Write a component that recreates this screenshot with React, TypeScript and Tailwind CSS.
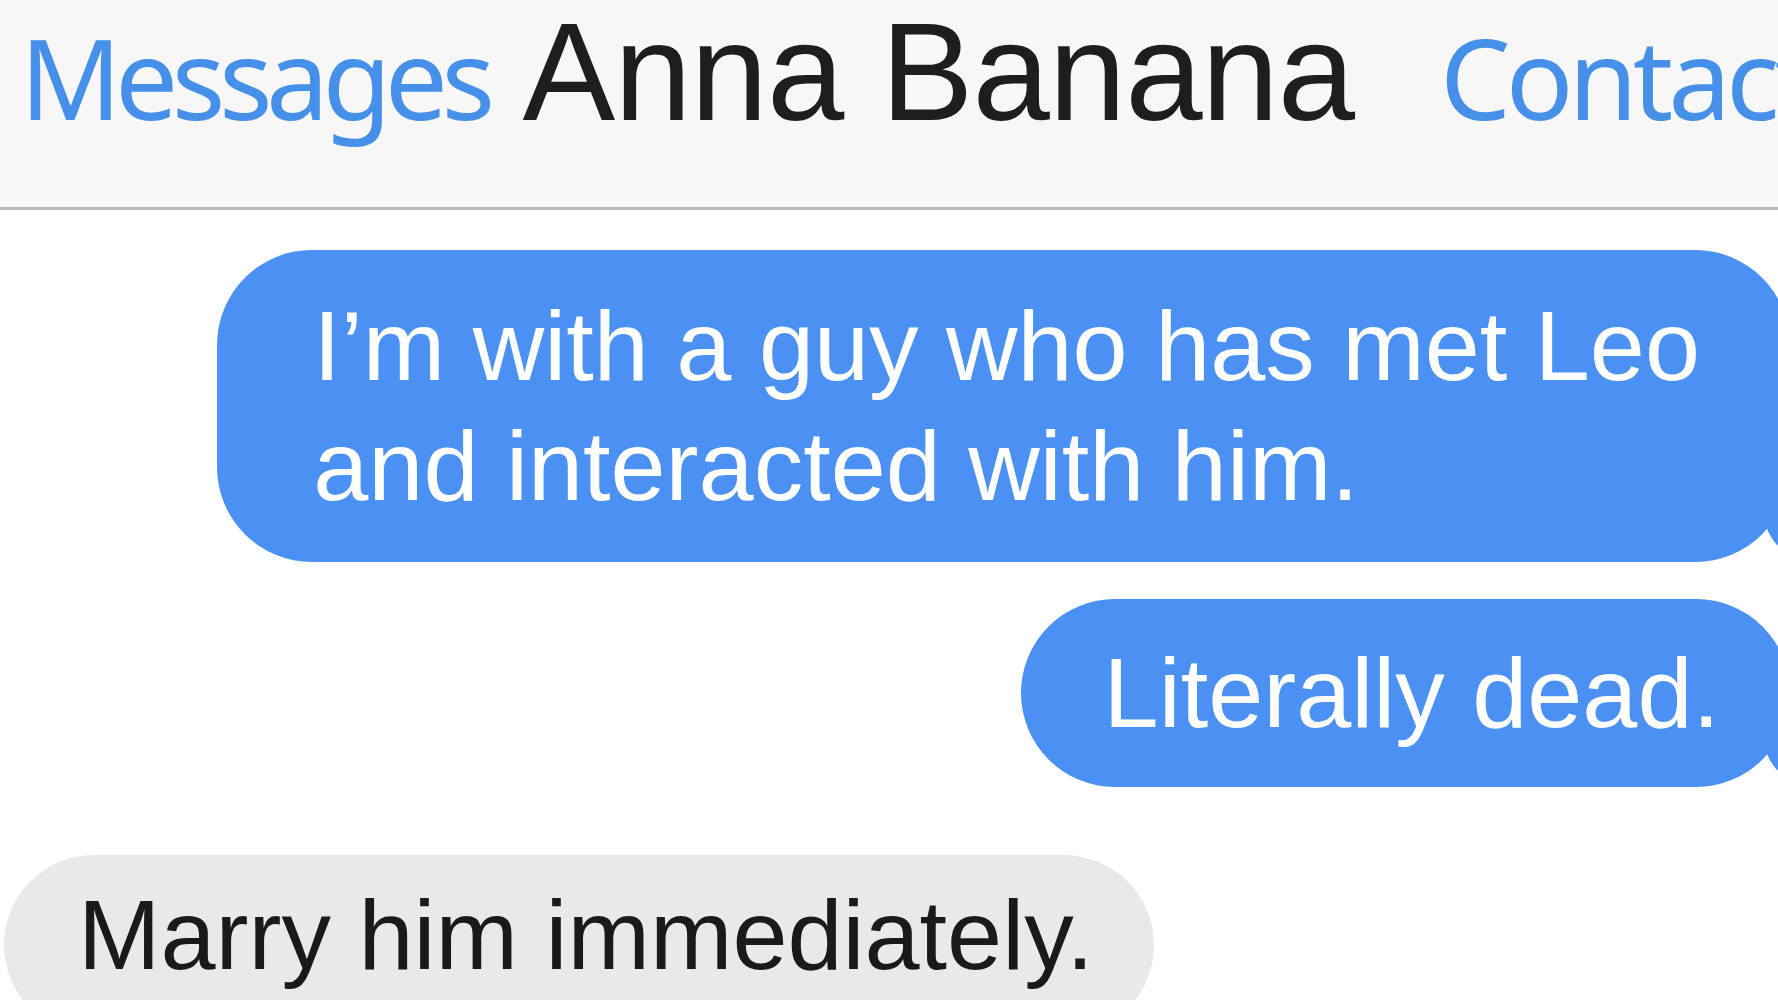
import React from 'react';

const sans = { fontFamily: '"Liberation Sans", Arial, sans-serif' };

const Tail: React.FC = () => (
  <svg
    className="absolute bottom-0 right-[-30px] w-[60px] h-[52px]"
    viewBox="0 0 60 52"
    aria-hidden
  >
    <path d="M6 16 L6 0 L60 0 L60 52 L44 52 C26 46 12 34 6 16 Z" fill="#4a91f3" />
  </svg>
);

const Outgoing: React.FC<{ lines: string[]; className: string }> = ({ lines, className }) => (
  <div className={`relative self-end bg-[#4a91f3] text-white text-[99px] leading-[120px] whitespace-nowrap ${className}`}>
    {lines.map((l, i) => (
      <div key={i}>{l}</div>
    ))}
    <Tail />
  </div>
);

export default function App() {
  return (
    <div className="w-[1778px] h-[1000px] overflow-hidden bg-white" style={sans}>
      <header className="h-[210px] bg-[#f7f7f7] border-b-[3px] border-[#b9b9b9] flex items-baseline pt-[2px] pl-[20px] whitespace-nowrap">
        <span className="font-['Noto_Sans',sans-serif] text-[112px] leading-none text-[#4690ea] tracking-[-6.5px]">
          Messages
        </span>
        <span className="ml-[34px] text-[139px] leading-none text-[#1e1e1e] tracking-[-1px]">Anna Banana</span>
        <span className="ml-[86px] font-['Noto_Sans',sans-serif] text-[112px] leading-none text-[#4690ea] tracking-[-5px]">
          Contact
        </span>
      </header>

      <main className="flex flex-col pt-[40px]">
        <Outgoing
          lines={['I’m with a guy who has met Leo', 'and interacted with him.']}
          className="mr-[-12px] rounded-[95px] pl-[96px] pr-[90px] py-[36px]"
        />
        <Outgoing
          lines={['Literally dead.']}
          className="mt-[37px] mr-[-12px] rounded-full pl-[83px] pr-[70px] py-[34px]"
        />
        <div className="mt-[68px] ml-[4px] self-start bg-[#e9e9eb] text-[#1a1a1a] text-[99px] leading-[120px] whitespace-nowrap rounded-[95px] pl-[74px] pr-[60px] pt-[20px] pb-[40px]">
          Marry him immediately.
        </div>
      </main>
    </div>
  );
}
